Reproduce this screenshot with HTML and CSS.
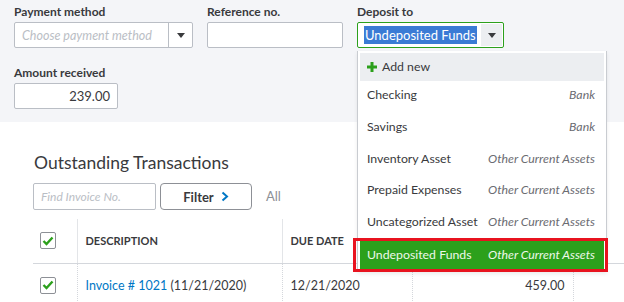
FILE: index.html
```html
<!DOCTYPE html>
<html lang="en">
<head>
  <meta charset="UTF-8" />
  <title>Receive Payment</title>
  <link rel="stylesheet" href="styles.css">
</head>
<body>
  <div class="top">
    <div class="fields">
      <div class="field pay">
        <label>Payment method</label>
        <div class="select">
          <span class="placeholder">Choose payment method</span>
          <span class="arrow"><svg width="8" height="5" viewBox="0 0 8 5"><polygon points="0,0 8,0 4,5" fill="#393a3d"/></svg></span>
        </div>
      </div>
      <div class="field ref">
        <label>Reference no.</label>
        <div class="input"></div>
      </div>
      <div class="field deposit">
        <label>Deposit to</label>
        <div class="select active">
          <span class="value"><span class="picked">Undeposited Funds</span></span>
          <span class="arrow"><svg width="8" height="5" viewBox="0 0 8 5"><polygon points="0,0 8,0 4,5" fill="#393a3d"/></svg></span>
        </div>
        <ul class="menu">
          <li class="add-new">
            <svg width="10" height="10" viewBox="0 0 10 10"><rect x="3.5" y="0" width="3" height="10" fill="#2ca01c"/><rect x="0" y="3.5" width="10" height="3" fill="#2ca01c"/></svg>
            Add new
          </li>
          <li><span>Checking</span><em>Bank</em></li>
          <li><span>Savings</span><em>Bank</em></li>
          <li><span>Inventory Asset</span><em>Other Current Assets</em></li>
          <li><span>Prepaid Expenses</span><em>Other Current Assets</em></li>
          <li><span>Uncategorized Asset</span><em>Other Current Assets</em></li>
          <li class="chosen"><span>Undeposited Funds</span><em>Other Current Assets</em></li>
        </ul>
      </div>
    </div>
    <div class="field amount">
      <label>Amount received</label>
      <div class="input num">239.00</div>
    </div>
  </div>

  <div class="main">
    <h2>Outstanding Transactions</h2>
    <div class="toolbar">
      <div class="find">Find Invoice No.</div>
      <button class="filter">Filter <svg width="8" height="11" viewBox="0 0 8 11"><polyline points="1.5,1.5 6,5.5 1.5,9.5" fill="none" stroke="#0077c5" stroke-width="2"/></svg></button>
      <span class="all">All</span>
    </div>
    <table class="txn">
      <thead>
        <tr>
          <th class="chk"><span class="box"><svg width="12" height="10" viewBox="0 0 12 10"><polyline points="1.5,5 4.5,8 10.5,1.5" fill="none" stroke="#2ca01c" stroke-width="2.4"/></svg></span></th>
          <th class="desc">DESCRIPTION</th>
          <th class="due">DUE DATE</th>
          <th class="orig"></th>
          <th class="rest"></th>
        </tr>
      </thead>
      <tbody>
        <tr>
          <td class="chk"><span class="box"><svg width="12" height="10" viewBox="0 0 12 10"><polyline points="1.5,5 4.5,8 10.5,1.5" fill="none" stroke="#2ca01c" stroke-width="2.4"/></svg></span></td>
          <td class="desc"><a href="#">Invoice # 1021</a> (11/21/2020)</td>
          <td class="due">12/21/2020</td>
          <td class="orig">459.00</td>
          <td class="rest"></td>
        </tr>
      </tbody>
    </table>
  </div>
</body>
</html>
```

FILE: styles.css
```css
* { margin: 0; padding: 0; box-sizing: border-box; }
html, body {
  width: 624px;
  height: 302px;
  overflow: hidden;
}
body {
  font-family: Lato, "Open Sans", sans-serif;
  color: #393a3d;
  background: #fff;
}
.top {
  background: #f4f5f8;
  height: 122px;
  padding: 4px 14px 0;
}
.fields {
  display: flex;
  gap: 14px;
  margin-bottom: 17px;
}
.field { position: relative; }
.field label {
  display: block;
  font-size: 12px;
  font-weight: bold;
  line-height: 16px;
  margin-bottom: 2px;
}
.pay { width: 179px; }
.ref { width: 136px; }
.deposit { width: 147px; }
.amount { width: 104px; }
.select, .input {
  height: 26px;
  background: #fff;
  border: 1px solid #babec5;
  border-radius: 2px;
  display: flex;
  align-items: center;
  font-size: 13px;
}
.input.num {
  justify-content: flex-end;
  padding-right: 7px;
}
.placeholder {
  flex: 1;
  padding-left: 7px;
  font-style: italic;
  font-size: 12.5px;
  color: #babec5;
}
.select .arrow {
  width: 24px;
  height: 100%;
  border-left: 1px solid #babec5;
  display: flex;
  align-items: center;
  justify-content: center;
}
.select.active {
  border-color: #2ca01c;
}
.select.active .arrow {
  border-left: none;
  width: 21px;
  height: 22px;
  margin-right: 1px;
  background: #eceef1;
}
.value {
  flex: 1;
  padding-left: 6px;
}
.picked {
  background: #3a7bd5;
  color: #fff;
  padding: 1px 1px;
}
.menu {
  position: absolute;
  top: 47px;
  left: 0;
  width: 250px;
  list-style: none;
  background: #fff;
  border: 1px solid #c9ccd1;
  border-top: none;
  padding: 2px 2px 0;
  z-index: 5;
  box-shadow: 0 2px 4px rgba(0, 0, 0, 0.08);
}
.menu li {
  height: 31.7px;
  display: flex;
  align-items: center;
  justify-content: space-between;
  gap: 5px;
  padding: 0 9px 4px 7px;
  font-size: 12.3px;
  white-space: nowrap;
  position: relative;
}
.menu li em {
  color: #6b6c72;
}
.menu li.add-new {
  height: 28px;
  background: #eceef1;
  justify-content: flex-start;
  padding-bottom: 1px;
}
.menu li.chosen {
  background: #2ca01c;
  color: #eef8ea;
  padding-bottom: 1px;
}
.menu li.chosen em { color: #eef8ea; }
.menu li.chosen::after {
  content: "";
  position: absolute;
  top: -1px;
  bottom: -1px;
  left: -7px;
  right: -4px;
  border: 3px solid #e8131f;
}
.main {
  padding: 29px 0 0 33px;
}
.main h2 {
  font-size: 17.5px;
  font-weight: normal;
  line-height: 24px;
  margin-left: 1px;
}
.toolbar {
  display: flex;
  align-items: center;
  margin-top: 8px;
  height: 27px;
}
.find {
  width: 123px;
  height: 27px;
  border: 1px solid #babec5;
  border-radius: 2px;
  font-size: 12px;
  font-style: italic;
  color: #babec5;
  padding-left: 7px;
  line-height: 25px;
}
.filter {
  margin-left: 4px;
  width: 92px;
  height: 27px;
  border: 1px solid #8d9096;
  border-radius: 4px;
  background: #fff;
  font-family: inherit;
  font-size: 13px;
  font-weight: bold;
  color: #393a3d;
  display: flex;
  align-items: center;
  justify-content: center;
  gap: 7px;
}
.all {
  margin-left: 14px;
  font-size: 13px;
  color: #8d9096;
  margin-top: -2px;
}
.txn {
  margin-top: 9px;
  border-collapse: collapse;
  table-layout: fixed;
  width: 600px;
}
.txn th, .txn td {
  height: 44px;
  font-size: 12px;
  text-align: left;
  padding: 0 8px;
}
.txn th {
  font-size: 11px;
  font-weight: bold;
  border-bottom: 1px solid #d4d7dc;
  border-right: 1px solid #e3e5e8;
}
.txn td {
  border-right: 1px dotted #d4d7dc;
  color: #393a3d;
  font-size: 12.5px;
}
.txn .chk { width: 44px; padding: 0 0 0 7px; }
.txn .desc { width: 205px; }
.txn .due { width: 130px; }
.txn .orig { width: 161px; text-align: right; }
.txn td.orig { padding-right: 8px; }
.txn .rest { border-right: none; }
.box {
  display: flex;
  width: 16px;
  height: 17px;
  border: 1px solid #8d9096;
  border-radius: 2px;
  background: #fff;
  align-items: center;
  justify-content: center;
}
.txn a {
  color: #0077c5;
  text-decoration: none;
}
```
